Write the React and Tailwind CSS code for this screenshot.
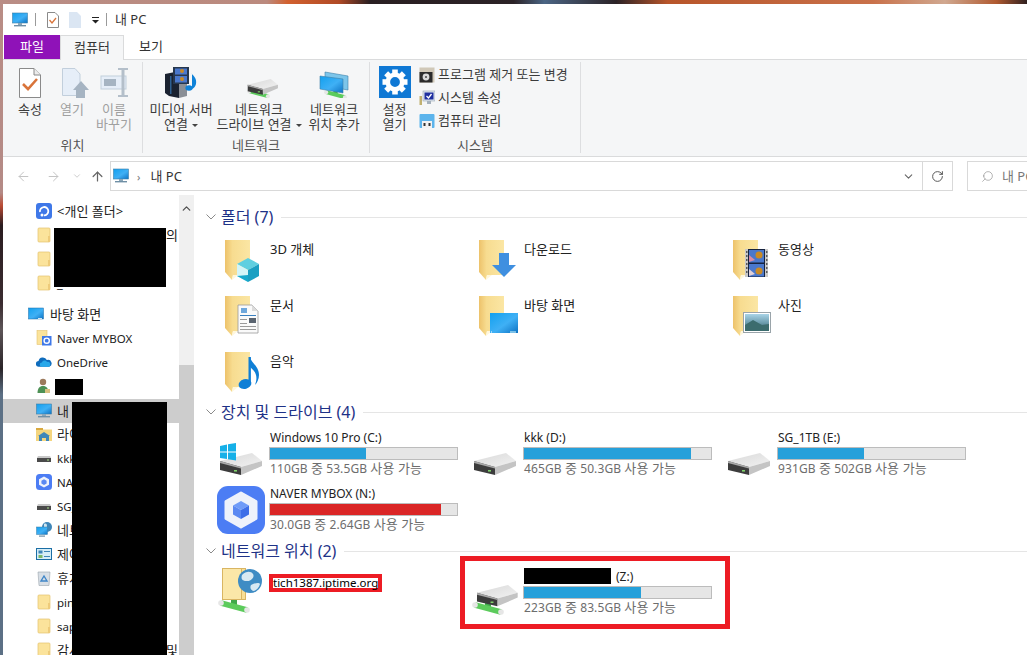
import React from 'react';
import { ArrowLeft, ArrowRight, ArrowUp, ChevronDown, ChevronUp, RotateCw, Search } from 'lucide-react';

// shared gradients, referenced by id from all the icons below
const Defs = () => (
  <svg width="0" height="0" className="absolute">
    <defs>
      <linearGradient id="fold" x1="0" y1="0" x2="1" y2="0">
        <stop offset="0" stopColor="#edc26a" />
        <stop offset="0.3" stopColor="#f7dc90" />
        <stop offset="1" stopColor="#fbe6a4" />
      </linearGradient>
      <linearGradient id="screen" x1="0" y1="0" x2="1" y2="1">
        <stop offset="0" stopColor="#12a0ef" />
        <stop offset="0.55" stopColor="#3fb0f5" />
        <stop offset="1" stopColor="#0e73c4" />
      </linearGradient>
      <linearGradient id="driveTop" x1="0" y1="0" x2="1" y2="1">
        <stop offset="0" stopColor="#d8d8d8" />
        <stop offset="1" stopColor="#f2f2f2" />
      </linearGradient>
      <linearGradient id="photo" x1="0" y1="0" x2="0" y2="1">
        <stop offset="0" stopColor="#a9d4e8" />
        <stop offset="0.5" stopColor="#6f9fb0" />
        <stop offset="1" stopColor="#2f5a68" />
      </linearGradient>
    </defs>
  </svg>
);

const FolderIcon = ({ children }) => (
  <svg width="48" height="48" viewBox="0 0 48 48" className="mt-[2px] shrink-0">
    <polygon points="7,4 32,4 32,39 15,39 14,44 7,36" fill="url(#fold)" />
    <polygon points="14,44 15,39 20,39" fill="#fff7dc" />
    {children}
  </svg>
);

const Cube = () => (
  <g>
    <polygon points="30,22 41,28 30,34 19,28" fill="#5fcfe0" />
    <polygon points="19,28 30,34 30,46 19,40" fill="#d3f5f8" />
    <polygon points="41,28 41,40 30,46 30,34" fill="#1a9fc2" />
    <polygon points="19,40 30,39 30,46" fill="#17a9cc" />
  </g>
);

const DownArrow = () => (
  <g fill="#3f8fe0">
    <rect x="27" y="17" width="10" height="13" />
    <polygon points="20,29 44,29 32,41" />
  </g>
);

const Film = () => (
  <g>
    <rect x="19" y="13" width="23" height="28" fill="#c9c9c9" />
    <rect x="22" y="13" width="17" height="28" fill="#16233f" />
    {[15, 19, 23, 27, 31, 35].map((y) => (
      <g key={y} fill="#5a5a5a">
        <rect x="20" y={y} width="1.5" height="2" />
        <rect x="40" y={y} width="1.5" height="2" />
      </g>
    ))}
    <rect x="23" y="14" width="15" height="12.5" fill="#4a78cc" />
    <rect x="23" y="28" width="15" height="12.5" fill="#4a78cc" />
    <circle cx="33" cy="19" r="3.5" fill="#c98a25" />
    <circle cx="33" cy="35" r="3.5" fill="#c98a25" />
    <polygon points="23,19 29,24 23,26" fill="#d88aa5" />
    <polygon points="23,33 29,38 23,40" fill="#e0d0d8" />
  </g>
);

const DocOverlay = () => (
  <g>
    <polygon points="20,13 34,13 40,19 40,41 20,41" fill="#fafafa" stroke="#9a9a9a" strokeWidth="0.8" />
    <polygon points="34,13 40,19 34,19" fill="#dcdcdc" />
    <rect x="23" y="16" width="6" height="5" fill="#6fa8dc" />
    <rect x="22" y="23" width="16" height="1" fill="#3a80c0" />
    <rect x="31" y="26" width="7" height="5" fill="#5a6470" />
    <rect x="22" y="27" width="7" height="1" fill="#9a9a9a" />
    <rect x="22" y="31" width="7" height="1" fill="#9a9a9a" />
    <rect x="22" y="34" width="16" height="1" fill="#9a9a9a" />
    <rect x="22" y="37" width="16" height="1" fill="#9a9a9a" />
  </g>
);

const Desk = () => (
  <g>
    <rect x="18" y="21" width="28" height="20" fill="url(#screen)" />
    <rect x="19" y="39.5" width="1" height="1" fill="#fff" />
    <rect x="38" y="39.5" width="6" height="1" fill="#dff" />
  </g>
);

const Picture = () => (
  <g>
    <rect x="17.5" y="20.5" width="27" height="20" fill="#fff" stroke="#9aa4aa" />
    <rect x="19" y="22" width="24" height="17" fill="url(#photo)" />
    <polygon points="19,33 27,28 36,33 43,32 43,39 19,39" fill="#3c6c6e" />
  </g>
);

const Note = () => (
  <g fill="#0f7fd6">
    <ellipse cx="27" cy="36" rx="6.5" ry="4.8" transform="rotate(-15 27 36)" />
    <rect x="30.5" y="9" width="2.4" height="27" />
    <path d="M32 9c1 6 9 9 9 18 0 4-2 8-4 10 1-3 2-6 1-10-1-4-4-6-6-8z" />
  </g>
);

// hard disk seen from above, 44x23
const DriveShape = ({ x = 0, y = 0, s = 1 }) => (
  <g transform={`translate(${x} ${y}) scale(${s})`}>
    <polygon points="1,8 33,0 43,8 22,14" fill="url(#driveTop)" />
    <polygon points="22,14 43,8 43,13 22,22" fill="#c4c4c4" />
    <polygon points="1,8 22,14 22,22 1,17" fill="#3c3c3c" />
    <polygon points="1,8 22,14 22,15.5 1,10" fill="#a8a8a8" />
    <rect x="15" y="17" width="3" height="1.6" fill="#7fd06a" />
  </g>
);

// green network connector with white plugs, 32x13
const Pipe = ({ x = 0, y = 0, s = 1 }) => (
  <g transform={`translate(${x} ${y}) scale(${s})`}>
    <line x1="16" y1="0" x2="16" y2="7" stroke="#3fa84a" strokeWidth="6" />
    <line x1="3" y1="3" x2="29" y2="10" stroke="#5ccb5c" strokeWidth="5.5" />
    <circle cx="3" cy="3" r="2.8" fill="#e6e6e6" />
    <circle cx="29" cy="10" r="2.8" fill="#e6e6e6" />
  </g>
);

const DriveIcon = ({ windows }) => (
  <svg width="46" height="40" viewBox="0 0 46 40" className="mt-[12px] shrink-0">
    <DriveShape x={1} y={13} />
    {windows && (
      <g fill="#16b0e8">
        <polygon points="2,6 9,4.5 9,11.5 2,11.5" />
        <polygon points="10,4.3 18,3 18,11.5 10,11.5" />
        <polygon points="2,12.5 9,12.5 9,19 2,18" />
        <polygon points="10,12.5 18,12.5 18,20.5 10,19.2" />
      </g>
    )}
  </svg>
);

const NetDriveIcon = () => (
  <svg width="46" height="40" viewBox="0 0 46 40" className="mt-[12px] shrink-0">
    <Pipe x={0} y={23} />
    <DriveShape x={4} y={6} s={0.97} />
  </svg>
);

const NetFolderIcon = () => (
  <svg width="46" height="48" viewBox="0 0 46 48" className="shrink-0">
    <Pipe x={0} y={33} />
    <rect x="4.5" y="1.5" width="23" height="31" fill="#f9df96" stroke="#d9b562" />
    <rect x="4.5" y="1.5" width="19" height="31" fill="#fbe7a8" stroke="#d9b562" />
    <circle cx="32" cy="14" r="12" fill="#3f8cc4" />
    <path d="M24 8c4-4 9-4 11-1s-2 7-5 7-8 0-6-6zM33 18c4-2 8-3 9-1-1 4-4 7-7 7-3-2-3-4-2-6z" fill="#d9e9f2" />
  </svg>
);

const MyboxIcon = () => (
  <svg width="48" height="48" viewBox="0 0 48 48" className="mt-[2px] -ml-px -mr-px shrink-0">
    <rect x="0" y="0" width="48" height="48" rx="11" fill="#4c7df4" />
    <polygon points="24,7 39,15.5 39,32.5 24,41 9,32.5 9,15.5" fill="#eef2fb" stroke="#eef2fb" strokeWidth="3" strokeLinejoin="round" />
    <polygon points="24,15 32,19.5 24,24 16,19.5" fill="#6f9bf8" />
    <polygon points="16,19.5 24,24 24,33 16,28.5" fill="#5a88f2" />
    <polygon points="32,19.5 32,28.5 24,33 24,24" fill="#3d6ee8" />
  </svg>
);

const Monitor = ({ size = 16 }) => (
  <svg width={size} height={size} viewBox="0 0 16 16" className="shrink-0">
    <rect x="0.5" y="1" width="15" height="10" fill="url(#screen)" stroke="#3d7fa8" strokeWidth="0.6" />
    <rect x="6" y="11" width="4" height="2" fill="#8aa6b8" />
    <rect x="2" y="13" width="12" height="1.4" fill="#6f8fa5" />
  </svg>
);

// small sidebar icons
const SmallFolder = () => (
  <svg width="16" height="16" viewBox="0 0 16 16" className="shrink-0">
    <rect x="2" y="1" width="12" height="14" rx="1" fill="#fbe39b" stroke="#e4c26e" strokeWidth="0.7" />
    <rect x="12" y="9" width="2" height="6" fill="#eecb7a" />
  </svg>
);
const PersonalVault = () => (
  <svg width="16" height="16" viewBox="0 0 16 16" className="shrink-0">
    <rect width="16" height="16" rx="3" fill="#3f78e8" />
    <path d="M4 9a4.2 4.2 0 1 1 4 3.4" fill="none" stroke="#fff" strokeWidth="1.8" />
    <circle cx="6" cy="12" r="1.5" fill="#fff" />
  </svg>
);
const SmallDesktop = () => (
  <svg width="16" height="16" viewBox="0 0 16 16" className="shrink-0">
    <rect x="0.5" y="2" width="15" height="11" fill="url(#screen)" stroke="#1a6ca8" strokeWidth="0.5" />
    <rect x="10" y="12" width="4" height="0.8" fill="#fff" />
  </svg>
);
const NaverFolder = () => (
  <svg width="16" height="16" viewBox="0 0 16 16" className="shrink-0">
    <rect x="1" y="0.5" width="10" height="14" fill="#fbe39b" stroke="#e4c26e" strokeWidth="0.6" />
    <rect x="6" y="6" width="9.5" height="9.5" fill="#3f78e8" />
    <circle cx="10.7" cy="10.7" r="2.6" fill="none" stroke="#fff" strokeWidth="1.4" />
  </svg>
);
const Cloud = () => (
  <svg width="16" height="16" viewBox="0 0 17 16" className="shrink-0">
    <path d="M3 13a3 3 0 0 1-.3-6A4.6 4.6 0 0 1 11.5 6a3.6 3.6 0 0 1 2.6 7z" fill="#0f6cbd" />
    <path d="M6 13a2.2 2.2 0 0 1 .3-4.4 3 3 0 0 1 5.4-.7 2.6 2.6 0 0 1 3.3 3.4 2 2 0 0 1-1.2 1.7z" fill="#28a8ea" />
  </svg>
);
const User = () => (
  <svg width="16" height="16" viewBox="0 0 16 16" className="shrink-0">
    <circle cx="7" cy="4" r="3.2" fill="#9c7a5c" />
    <path d="M1.5 15c0-4.5 2-7 5.5-7s5.5 2.5 5.5 7z" fill="#4d9155" />
    <rect x="9" y="11" width="5" height="4" fill="#d8c080" />
  </svg>
);
const Library = () => (
  <svg width="16" height="16" viewBox="0 0 16 16" className="shrink-0">
    <path d="M0 2h6l1 1.5h9V15H0z" fill="#f4d57e" />
    <rect y="2" width="7" height="2" fill="#d9a93f" />
    <polygon points="8,6 14,10 13,10 13,15 10,15 10,12 6,12 6,15 3,15 3,10 2,10" fill="#3f86b8" />
  </svg>
);
const SmallDrive = () => (
  <svg width="16" height="16" viewBox="0 0 16 16" className="shrink-0">
    <polygon points="2,6 14,6 15,8 1,8" fill="#c8c8c8" />
    <rect x="1" y="8" width="14" height="4" fill="#4a4a4a" />
    <rect x="11" y="9.5" width="2" height="1" fill="#a8e08a" />
  </svg>
);
const SmallMybox = () => (
  <svg width="16" height="16" viewBox="0 0 16 16" className="shrink-0">
    <rect width="16" height="16" rx="3.5" fill="#4c7df4" />
    <polygon points="8,2.5 13,5.2 13,10.8 8,13.5 3,10.8 3,5.2" fill="#eef2fb" />
    <polygon points="8,5.3 10.6,6.7 10.6,9.5 8,10.9 5.4,9.5 5.4,6.7" fill="#5a88f2" />
  </svg>
);
const Network = () => (
  <svg width="16" height="16" viewBox="0 0 16 16" className="shrink-0">
    <circle cx="11" cy="5" r="5" fill="#3f86b8" />
    <path d="M8 2c2-1 3 0 3 2s-2 2-3 1z" fill="#cfe4ee" />
    <rect x="0.5" y="5" width="11" height="7.5" fill="url(#screen)" stroke="#3d7fa8" strokeWidth="0.5" />
    <rect x="3" y="13.5" width="6" height="1.2" fill="#6f8fa5" />
  </svg>
);
const Control = () => (
  <svg width="16" height="16" viewBox="0 0 16 16" className="shrink-0">
    <rect x="0.5" y="2.5" width="15" height="11" fill="#d6edf7" stroke="#1b6ea5" />
    <rect x="2.5" y="4.5" width="4" height="3" fill="#3f86b8" />
    <rect x="8" y="5" width="6" height="1" fill="#3f86b8" />
    <rect x="2.5" y="9" width="4" height="3" fill="#7ab86a" />
    <rect x="8" y="10" width="6" height="1" fill="#3f86b8" />
  </svg>
);
const Bin = () => (
  <svg width="16" height="16" viewBox="0 0 16 16" className="shrink-0">
    <polygon points="2,2 14,2 13,15.5 3,15.5" fill="#d8dfe6" stroke="#9aa4ac" strokeWidth="0.6" />
    <polygon points="8,6 11,11 5,11" fill="none" stroke="#3f86c8" strokeWidth="1.4" />
  </svg>
);

// ribbon icons
const PropsDoc = () => (
  <svg width="32" height="32" viewBox="0 0 32 32">
    <polygon points="5.5,2.5 20,2.5 26.5,9 26.5,31.5 5.5,31.5" fill="#fff" stroke="#8a8a8a" />
    <polyline points="20,2.5 20,9 26.5,9" fill="#ececec" stroke="#8a8a8a" />
    <polyline points="9,18 14,23 23,13" fill="none" stroke="#d9743a" strokeWidth="2.6" />
  </svg>
);
const OpenDoc = () => (
  <svg width="32" height="32" viewBox="0 0 32 32" className="overflow-visible">
    <polygon points="6.5,2.5 19,2.5 24,8 24,29.5 6.5,29.5" fill="#e6eef8" stroke="#c2cfdc" />
    <polygon points="25,15 33,24 29,24 29,32 20,32 20,24 17,24" fill="#a6b4c2" />
  </svg>
);
const RenameIcon = () => (
  <svg width="32" height="32" viewBox="0 0 32 32" className="overflow-visible">
    <rect x="3" y="10" width="25" height="13" fill="#e6eef8" stroke="#c2cfdc" />
    <rect x="6" y="13" width="12" height="7" fill="#a6b4c2" />
    <rect x="23.5" y="3" width="3" height="27" fill="#b4bfca" />
    <rect x="20" y="2" width="10" height="2" fill="#b4bfca" />
    <rect x="20" y="29" width="10" height="2" fill="#b4bfca" />
  </svg>
);
const MediaIcon = () => (
  <svg width="32" height="32" viewBox="0 0 32 32">
    <polygon points="0,8 10,6 14,8 14,32 4,30 0,27" fill="#1a2230" />
    <polygon points="14,14 22,15 22,30 14,32" fill="#8a8f96" />
    <rect x="5" y="10" width="1.5" height="18" fill="#2d5f90" />
    <rect x="8" y="1" width="16" height="17" fill="#26374e" />
    <rect x="10" y="2.5" width="12" height="6" fill="#4a78cc" />
    <rect x="10" y="10" width="12" height="6.5" fill="#4a78cc" />
    <circle cx="17" cy="5" r="2" fill="#c98a25" />
    <circle cx="17" cy="13" r="2" fill="#c98a25" />
    <ellipse cx="24" cy="22" rx="3.6" ry="2.8" fill="#0f82d8" />
    <path d="M26 7c3 3 6 6 5 11-1 3-2 4-4 5V8z" fill="#0f82d8" />
  </svg>
);
const RibbonNetDrive = () => (
  <svg width="32" height="32" viewBox="0 0 32 32" className="overflow-visible">
    <Pipe x={4} y={23} s={0.72} />
    <DriveShape x={4} y={13} s={0.72} />
  </svg>
);
const NetLocation = () => (
  <svg width="32" height="32" viewBox="0 0 32 32">
    <Pipe x={6} y={24} s={0.72} />
    <polygon points="7,6 30,10 30,24 7,20" fill="#7cc5ea" stroke="#3d7fa8" strokeWidth="0.6" />
    <polygon points="2,10 25,13 25,27 2,23" fill="url(#screen)" stroke="#3d7fa8" strokeWidth="0.6" />
  </svg>
);
const Gear = () => (
  <svg width="32" height="32" viewBox="0 0 32 32">
    <rect width="32" height="32" fill="#0f78d4" />
    {[0, 45, 90, 135, 180, 225, 270, 315].map((a) => (
      <rect key={a} x="13.2" y="3.5" width="5.6" height="6" fill="#fff" transform={`rotate(${a} 16 16)`} />
    ))}
    <circle cx="16" cy="16" r="7.2" fill="none" stroke="#fff" strokeWidth="4.6" />
  </svg>
);
const ProgramIcon = () => (
  <svg width="16" height="16" viewBox="0 0 16 16" className="shrink-0">
    <rect x="0.5" y="0.5" width="15" height="15" fill="#d0c8b8" />
    <rect x="0.5" y="5" width="13" height="10.5" fill="#2b2b2b" />
    <circle cx="7" cy="10" r="3.4" fill="#d8d8d8" />
    <circle cx="7" cy="10" r="1" fill="#444" />
  </svg>
);
const SysIcon = () => (
  <svg width="16" height="16" viewBox="0 0 16 16" className="shrink-0">
    <rect x="0.5" y="6" width="2.5" height="9" fill="#c0b070" />
    <rect x="4" y="1" width="12" height="10" fill="#dfe6ee" stroke="#8a9aa8" strokeWidth="0.5" />
    <rect x="5.5" y="2.5" width="9" height="7" fill="#1f2f9f" />
    <polyline points="7.5,6 9.5,8 12.5,4" fill="none" stroke="#fff" strokeWidth="1.3" />
    <rect x="8" y="11" width="4" height="3" fill="#a4b0bc" />
  </svg>
);
const MgmtIcon = () => (
  <svg width="16" height="16" viewBox="0 0 16 16" className="shrink-0">
    <rect x="0.5" y="1" width="15" height="14" rx="1" fill="#5cb4ec" />
    <rect x="3" y="8" width="10" height="7" fill="#f2f2f2" />
    <rect x="4.5" y="10" width="2" height="3" fill="#333" />
    <rect x="9.5" y="10" width="2" height="3" fill="#333" />
  </svg>
);

const Caret = () => (
  <span className="inline-block w-0 h-0 ml-[4px] align-middle border-x-[3px] border-x-transparent border-t-[3px] border-t-[#444]" />
);

const RibbonBtn = ({ icon, lines, className, disabled, caret }) => (
  <div className={`flex flex-col items-center shrink-0 ${className} ${disabled ? 'text-[#a0a0a0]' : 'text-[#3b3b3b]'}`}>
    <div className="h-[40px] flex items-center justify-center">{icon}</div>
    {lines.map((l, i) => (
      <div key={l} className="whitespace-nowrap">
        {l}
        {caret && i === lines.length - 1 && <Caret />}
      </div>
    ))}
  </div>
);

const Group = ({ label, className, inner, children }) => (
  <div className={`flex flex-col h-[91px] mt-[2px] border-r border-[#dddee0] shrink-0 ${className}`}>
    <div className={`flex-1 flex ${inner}`}>{children}</div>
    <div className="text-center text-[#555]">{label}</div>
  </div>
);

const SideRow = ({ icon, label, right, selected, top, latin }) => (
  <div className={`h-[24px] flex items-center pr-[1px] ${top ? 'pl-[25px]' : 'pl-[33px]'} ${selected ? 'bg-[#cdcdcd] mt-px -mb-px' : ''}`}>
    {icon}
    <span className={`flex-1 flex justify-between whitespace-nowrap text-[#222] ${top ? 'ml-[6px]' : 'ml-[5px]'} ${latin ? 'text-[11.5px]' : ''}`}>
      <span>{label}</span>
      {right && <span>{right}</span>}
    </span>
  </div>
);

const GroupHead = ({ title }) => (
  <div className="h-[20px] flex items-center -ml-[12px]">
    <svg width="10" height="6" viewBox="0 0 10 6" className="shrink-0">
      <polyline points="0.5,0.5 5,5 9.5,0.5" fill="none" stroke="#8a8a8a" />
    </svg>
    <span className="ml-[5px] text-[16px] text-[#1e3287] whitespace-nowrap">{title}</span>
    <div className="flex-1 h-px bg-[#e5e5e5] ml-[8px]" />
  </div>
);

const FolderTile = ({ label, children }) => (
  <div className="h-[56px] flex">
    <FolderIcon>{children}</FolderIcon>
    <span className="ml-[4px] mt-[8px] text-[#222]">{label}</span>
  </div>
);

const DriveTile = ({ icon, name, total, free, red }) => {
  const used = (1 - parseFloat(free) / parseFloat(total)) * 100;
  return (
    <div className="h-[56px] flex">
      {icon}
      <div className="ml-[6px] pt-[2px] w-[188px]">
        <div className="text-[12px] text-[#222] whitespace-nowrap">{name}</div>
        <div className="h-[13px] mt-[2px] -ml-px w-[189px] bg-[#e6e6e6] border border-[#bcbcbc]">
          <div className={`h-full ${red ? 'bg-[#da2626]' : 'bg-[#26a0da]'}`} style={{ width: `${used}%` }} />
        </div>
        <div className="mt-px text-[12px] tracking-[0.1px] text-[#6d6d6d] whitespace-nowrap">
          {total} <span className="text-[13px]">중</span> {free} <span className="text-[13px]">사용 가능</span>
        </div>
      </div>
    </div>
  );
};

export default function App() {
  return (
    <div className="relative w-[1027px] h-[655px] overflow-hidden flex flex-col text-[13px] leading-[15px] font-['Noto_Sans','Noto_Sans_CJK_KR',sans-serif]">
      <Defs />
      {/* wallpaper peeking out above and left of the window */}
      <div className="h-[4px] shrink-0 bg-[linear-gradient(90deg,#b98d85_0%,#bb8a7e_26%,#d2612f_28%,#b04a26_33%,#2a1f22_36%,#2b2226_50%,#4b6584_53%,#2b2226_60%,#b8552a_65%,#c9714a_85%,#d0a890_92%,#b05a30_97%,#302020_100%)]" />
      <div className="flex-1 flex min-h-0">
        <div className="w-[3px] shrink-0 bg-[linear-gradient(180deg,#b98d85_0%,#b48a86_29%,#b94a33_31%,#2a1c20_34%,#3a2c30_46%,#5d5558_50%,#2a2428_56%,#5c7085_60%,#5c7085_100%)]" />
        <div className="flex-1 min-w-0 flex flex-col bg-white">
          {/* title bar */}
          <div className="h-[31px] shrink-0 flex items-center pl-[9px] text-[#333]">
            <Monitor />
            <div className="ml-[7px] w-px h-[13px] bg-[#9a9a9a]" />
            <svg width="12" height="16" viewBox="0 0 12 16" className="ml-[11px]">
              <polygon points="0.5,0.5 8,0.5 11.5,4 11.5,15.5 0.5,15.5" fill="#fff" stroke="#8a8a8a" />
              <polyline points="2.5,8 5,11 9,6" fill="none" stroke="#d9743a" strokeWidth="1.3" />
            </svg>
            <svg width="12" height="16" viewBox="0 0 12 16" className="ml-[10px]">
              <polygon points="0,0 8,0 12,4 12,16 0,16" fill="#dbe6f3" />
            </svg>
            <svg width="8" height="8" viewBox="0 0 8 8" className="ml-[11px]">
              <rect x="0" y="1" width="7" height="1" fill="#222" />
              <polygon points="0,4 7,4 3.5,7.5" fill="#222" />
            </svg>
            <div className="ml-[6px] w-px h-[13px] bg-[#9a9a9a]" />
            <span className="ml-[8px]">내 PC</span>
          </div>
          {/* tabs */}
          <div className="h-[25px] shrink-0 flex border-b border-[#dadbdc] text-center">
            <div className="ml-px w-[56px] h-[24px] leading-[23px] bg-[#8f12b8] text-white">파일</div>
            <div className="w-[64px] h-[25px] leading-[23px] bg-[#f5f6f7] border border-b-0 border-[#dadbdc] text-[#333]">컴퓨터</div>
            <div className="w-[54px] leading-[23px] text-[#333]">보기</div>
          </div>
          {/* ribbon */}
          <div className="h-[97px] shrink-0 flex bg-[#f5f6f7] border-b border-[#dadbdc]">
            <Group label="위치" className="w-[140px]" inner="pl-[6px]">
              <RibbonBtn className="w-[42px]" icon={<PropsDoc />} lines={['속성']} />
              <RibbonBtn className="w-[42px]" disabled icon={<OpenDoc />} lines={['열기']} />
              <RibbonBtn className="w-[42px]" disabled icon={<RenameIcon />} lines={['이름', '바꾸기']} />
            </Group>
            <Group label="네트워크" className="w-[227px]" inner="pl-[4px]">
              <RibbonBtn className="w-[68px]" icon={<MediaIcon />} lines={['미디어 서버', '연결']} caret />
              <RibbonBtn className="w-[82px] ml-[3px]" icon={<RibbonNetDrive />} lines={['네트워크', '드라이브 연결']} caret />
              <RibbonBtn className="w-[68px]" icon={<NetLocation />} lines={['네트워크', '위치 추가']} />
            </Group>
            <Group label="시스템" className="w-[211px]">
              <RibbonBtn className="w-[49px]" icon={<Gear />} lines={['설정', '열기']} />
              <div className="pt-[1px] text-[#3b3b3b]">
                {[
                  [<ProgramIcon key="p" />, '프로그램 제거 또는 변경'],
                  [<SysIcon key="s" />, '시스템 속성'],
                  [<MgmtIcon key="m" />, '컴퓨터 관리'],
                ].map(([ic, t]) => (
                  <div key={t} className="h-[23px] flex items-center whitespace-nowrap">
                    {ic}
                    <span className="ml-[3px]">{t}</span>
                  </div>
                ))}
              </div>
            </Group>
          </div>
          {/* address bar */}
          <div className="h-[38px] shrink-0 flex items-center overflow-hidden">
            <ArrowLeft size={15} strokeWidth={1.6} className="ml-[13px] shrink-0 text-[#c4c4c4]" />
            <ArrowRight size={15} strokeWidth={1.6} className="ml-[15px] shrink-0 text-[#c4c4c4]" />
            <ChevronDown size={10} strokeWidth={2} className="ml-[11px] shrink-0 text-[#c4c4c4]" />
            <ArrowUp size={15} strokeWidth={2} className="ml-[8px] shrink-0 text-[#666]" />
            <div className="ml-[5px] w-[843px] h-[30px] shrink-0 flex items-center border border-[#d9d9d9] pl-[2px] text-[#333]">
              <Monitor />
              <span className="ml-[8px] text-[#777] text-[11px]">›</span>
              <span className="ml-[10px]">내 PC</span>
              <ChevronDown size={13} strokeWidth={2} className="ml-auto mr-[7px] text-[#666]" />
              <div className="w-[30px] h-full shrink-0 flex items-center justify-center border-l border-[#d9d9d9]">
                <RotateCw size={13} strokeWidth={1.8} className="text-[#555]" />
              </div>
            </div>
            <div className="ml-[14px] w-[80px] h-[30px] shrink-0 flex items-center border border-[#d9d9d9] pl-[13px] text-[#777] whitespace-nowrap">
              <Search size={13} strokeWidth={1} className="shrink-0 -scale-x-100 text-[#777]" />
              <span className="ml-[8px]">내 PC 검색</span>
            </div>
          </div>
          {/* body */}
          <div className="flex-1 min-h-0 flex">
            <div className="w-[176px] shrink-0 pt-[4px] overflow-hidden">
              <SideRow icon={<PersonalVault />} label="<개인 폴더>" />
              <SideRow icon={<SmallFolder />} label="" right="30의" />
              <SideRow icon={<SmallFolder />} label="" />
              <SideRow icon={<SmallFolder />} label="_" />
              <div className="h-[7px]" />
              <SideRow top icon={<SmallDesktop />} label="바탕 화면" />
              <SideRow latin icon={<NaverFolder />} label="Naver MYBOX" />
              <SideRow latin icon={<Cloud />} label="OneDrive" />
              <SideRow icon={<User />} label="" />
              <SideRow selected icon={<Monitor />} label="내 PC" />
              <SideRow icon={<Library />} label="라이브러리" />
              <SideRow latin icon={<SmallDrive />} label="kkk (D:)" />
              <SideRow latin icon={<SmallMybox />} label="NAVER MYBOX (N:)" />
              <SideRow latin icon={<SmallDrive />} label="SG_1TB (E:)" />
              <SideRow icon={<Network />} label="네트워크" />
              <SideRow icon={<Control />} label="제어판" />
              <SideRow icon={<Bin />} label="휴지통" />
              <SideRow latin icon={<SmallFolder />} label="pin" />
              <SideRow latin icon={<SmallFolder />} label="sap" />
              <SideRow icon={<SmallFolder />} label="감사" right="및" />
            </div>
            {/* scrollbar */}
            <div className="w-[15px] shrink-0 flex flex-col bg-[#f0f0f0]">
              <div className="h-[170px] pt-[7px] flex justify-center">
                <ChevronUp size={13} strokeWidth={2.4} className="text-[#505050]" />
              </div>
              <div className="flex-1 bg-[#cdcdcd]" />
            </div>
            {/* content pane */}
            <div className="flex-1 min-w-0 pl-[24px] pt-[12px]">
              <GroupHead title="폴더 (7)" />
              <div className="grid grid-cols-[repeat(3,254px)] mt-[7px]">
                <FolderTile label="3D 개체"><Cube /></FolderTile>
                <FolderTile label="다운로드"><DownArrow /></FolderTile>
                <FolderTile label="동영상"><Film /></FolderTile>
                <FolderTile label="문서"><DocOverlay /></FolderTile>
                <FolderTile label="바탕 화면"><Desk /></FolderTile>
                <FolderTile label="사진"><Picture /></FolderTile>
                <FolderTile label="음악"><Note /></FolderTile>
              </div>
              <GroupHead title="장치 및 드라이브 (4)" />
              <div className="grid grid-cols-[repeat(3,254px)] mt-[6px]">
                <DriveTile icon={<DriveIcon windows />} name="Windows 10 Pro (C:)" total="110GB" free="53.5GB" />
                <DriveTile icon={<DriveIcon />} name="kkk (D:)" total="465GB" free="50.3GB" />
                <DriveTile icon={<DriveIcon />} name="SG_1TB (E:)" total="931GB" free="502GB" />
                <DriveTile icon={<MyboxIcon />} name="NAVER MYBOX (N:)" total="30.0GB" free="2.64GB" red />
              </div>
              <div className="mt-px">
                <GroupHead title="네트워크 위치 (2)" />
              </div>
              <div className="grid grid-cols-[repeat(3,254px)] mt-[6px]">
                <div className="h-[56px] flex">
                  <NetFolderIcon />
                  <div className="ml-[5px] mt-[7px] w-[113px] h-[18px] bg-[#ed1c24] px-[4px] py-[4px]">
                    <div className="h-[10px] bg-white text-[11.5px] text-black leading-[10px] whitespace-nowrap">tich1387.iptime.org</div>
                  </div>
                </div>
                <DriveTile
                  icon={<NetDriveIcon />}
                  name={<><span className="inline-block w-[92px]" />(Z:)</>}
                  total="223GB"
                  free="83.5GB"
                />
              </div>
            </div>
          </div>
        </div>
      </div>
      {/* redactions and the red marker painted on top of the screenshot */}
      <div className="absolute left-[54px] top-[228px] w-[112px] h-[59px] bg-black" />
      <div className="absolute left-[55px] top-[379px] w-[28px] h-[16px] bg-black" />
      <div className="absolute left-[72px] top-[402px] w-[95px] h-[253px] bg-black" />
      <div className="absolute left-[524px] top-[568px] w-[87px] h-[16px] bg-black" />
      <div className="absolute left-[460px] top-[556px] w-[270px] h-[73px] border-[5px] border-[#ed1c24]" />
    </div>
  );
}
